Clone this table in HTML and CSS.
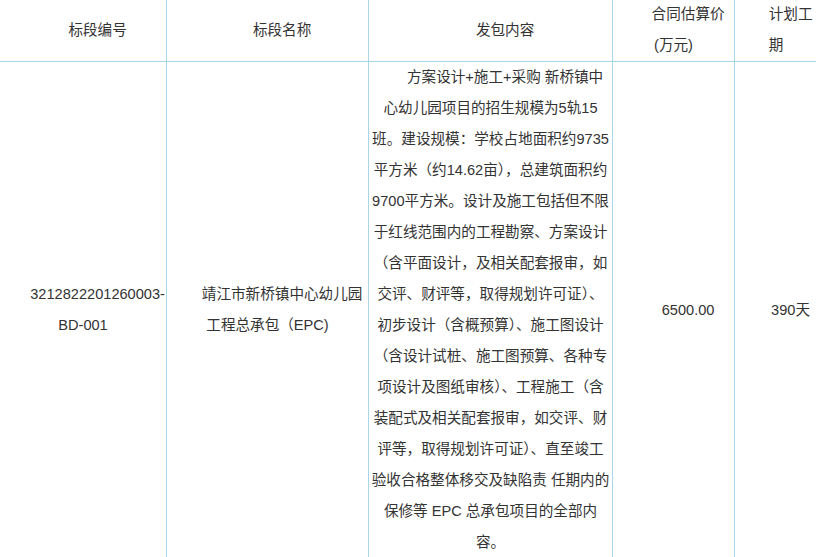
FILE: index.html
```html
<!DOCTYPE html>
<html lang="zh-CN">
<head>
<meta charset="utf-8">
<title>标段信息</title>
<link rel="stylesheet" href="styles.css">
</head>
<body>
<table class="bid-table">
  <colgroup>
    <col class="c-code">
    <col class="c-name">
    <col class="c-content">
    <col class="c-price">
    <col class="c-period">
  </colgroup>
  <thead>
    <tr>
      <th><p>标段编号</p></th>
      <th><p>标段名称</p></th>
      <th><p>发包内容</p></th>
      <th><p>合同估算价(万元)</p></th>
      <th><p>计划工期</p></th>
    </tr>
  </thead>
  <tbody>
    <tr>
      <td><p>3212822201260003-BD-001</p></td>
      <td><p>靖江市新桥镇中心幼儿园工程总承包（EPC)</p></td>
      <td><p class="lines">方案设计+施工+采购 新桥镇中<br>心幼儿园项目的招生规模为5轨15<br>班。建设规模：学校占地面积约9735<br>平方米（约14.62亩），总建筑面积约<br>9700平方米。设计及施工包括但不限<br>于红线范围内的工程勘察、方案设计<br>（含平面设计，及相关配套报审，如<br>交评、财评等，取得规划许可证）、<br>初步设计（含概预算）、施工图设计<br>（含设计试桩、施工图预算、各种专<br>项设计及图纸审核）、工程施工（含<br>装配式及相关配套报审，如交评、财<br>评等，取得规划许可证）、直至竣工<br>验收合格整体移交及缺陷责 任期内的<br>保修等 EPC 总承包项目的全部内<br>容。</p></td>
      <td><p>6500.00</p></td>
      <td><p>390天</p></td>
    </tr>
  </tbody>
</table>
</body>
</html>
```

FILE: styles.css
```css
html, body {
  margin: 0;
  padding: 0;
  background: #ffffff;
}

body {
  overflow: hidden;
}

.bid-table {
  border-collapse: collapse;
  table-layout: fixed;
  width: 818px;
  margin: -2px 0 0 -1px;
  font-family: "Liberation Sans", "Noto Sans CJK SC", sans-serif;
  font-size: 14.6px;
  line-height: 31px;
  color: #333333;
}

.c-code { width: 167px; }
.c-name { width: 202px; }
.c-content { width: 244px; }
.c-price { width: 122px; }
.c-period { width: 83px; }

.bid-table th,
.bid-table td {
  border: 1px solid #a8d6e8;
  padding: 0;
  vertical-align: middle;
  text-align: center;
  font-weight: normal;
}

.bid-table p {
  margin: 0;
  text-indent: 2em;
}

.bid-table .lines {
  white-space: nowrap;
}
```
